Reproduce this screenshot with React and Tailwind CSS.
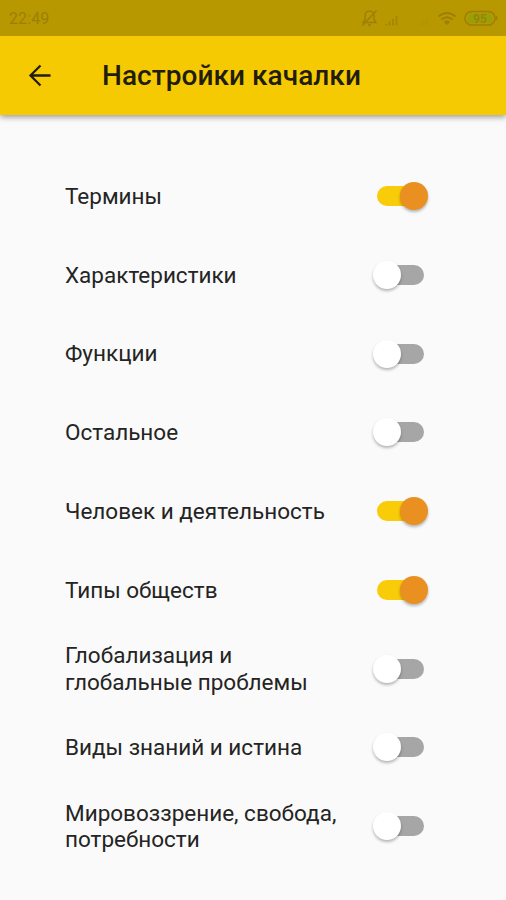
const settings = [
  { lines: ['Термины'], on: true },
  { lines: ['Характеристики'], on: false },
  { lines: ['Функции'], on: false },
  { lines: ['Остальное'], on: false },
  { lines: ['Человек и деятельность'], on: true },
  { lines: ['Типы обществ'], on: true },
  { lines: ['Глобализация и', 'глобальные проблемы'], on: false },
  { lines: ['Виды знаний и истина'], on: false },
  { lines: ['Мировоззрение, свобода,', 'потребности'], on: false },
];

function Switch({ on }) {
  return (
    <span role="switch" aria-checked={on} className="relative block h-7 w-[56px] shrink-0">
      <span className={'absolute top-[4px] left-[5px] h-[20px] w-[47px] rounded-full ' + (on ? 'bg-[#f8cc08]' : 'bg-[#a6a6a6]')} />
      <span
        className={
          'absolute top-0 size-[28px] rounded-full shadow-[0_2px_3px_rgba(0,0,0,0.28)] ' +
          (on ? 'left-[28px] bg-[#ea9020]' : 'left-[1px] bg-white')
        }
      />
    </span>
  );
}

function StatusBar() {
  return (
    <div className="flex h-[36px] items-center justify-between bg-[#b89800] pr-[8px] pl-[9px] text-[#9c7f08]">
      <span className="pt-[2px] text-[16px] tracking-[0.1px]">22:49</span>
      <svg width="140" height="24" viewBox="0 0 140 24" fill="none" stroke="currentColor" strokeWidth="1.4">
        <path d="M5 16.500h13l-2-3V9.500a4.500 4.500 0 0 0-9 0v4zM10 19h3M4.500 19.500 18.500 4.500" />
        <path d="M28 18v1.500M31.500 15.500v4M35 13v6.500M38.500 10v9.500" strokeWidth="1.700" opacity="0.8" />
        <path d="M62 18v1.500M65.500 15.500v4M69 13v6.500" strokeWidth="1.700" opacity="0.18" />
        <path d="M80.500 10.500q8.500-7 17 0M83.500 13.500q5.500-4.500 11 0M86.500 16.500q2.500-2 5 0" strokeWidth="2" />
        <path d="m86.500 16.500 2.500 2.500 2.500-2.500z" fill="currentColor" stroke="none" />
        <rect x="107" y="5.500" width="30" height="13.500" rx="6.500" strokeWidth="1.500" />
        <rect x="110" y="7.500" width="24" height="9.500" rx="4" fill="#98a008" stroke="none" />
        <path d="M138.500 10v4" strokeWidth="1.500" />
        <text x="122" y="16.500" textAnchor="middle" fontSize="12" fontWeight="500" fill="currentColor" stroke="none">95</text>
      </svg>
    </div>
  );
}

export default function App() {
  return (
    <div className="h-[900px] w-[506px] overflow-hidden bg-[#fafafa] font-[Roboto,sans-serif] text-[#242424]">
      <header className="relative shadow-[0_2px_6px_rgba(0,0,0,0.4)]">
        <StatusBar />
        <div className="flex h-[79px] items-center bg-[#f6ca02] text-[#211d0a]">
          <svg className="ml-[28px] shrink-0" width="24" height="24" viewBox="0 0 24 24" fill="none" stroke="currentColor" strokeWidth="2.300">
            <path d="M22.500 11.500H3M12.500 1.500 2.500 11.500l10 10" />
          </svg>
          <h1 className="ml-[50px] text-[28px] leading-[34px] font-medium tracking-[0.05px] whitespace-nowrap">Настройки качалки</h1>
        </div>
      </header>
      <main className="pt-[41.750px]">
        {settings.map(({ lines, on }) => (
          <div key={lines[0]} className="flex h-[78.75px] items-center justify-between pr-[78px] pl-[65px]">
            <div className="text-[22.5px] leading-[26.500px] whitespace-nowrap">
              {lines.map((line) => (
                <div key={line}>{line}</div>
              ))}
            </div>
            <Switch on={on} />
          </div>
        ))}
      </main>
    </div>
  );
}
